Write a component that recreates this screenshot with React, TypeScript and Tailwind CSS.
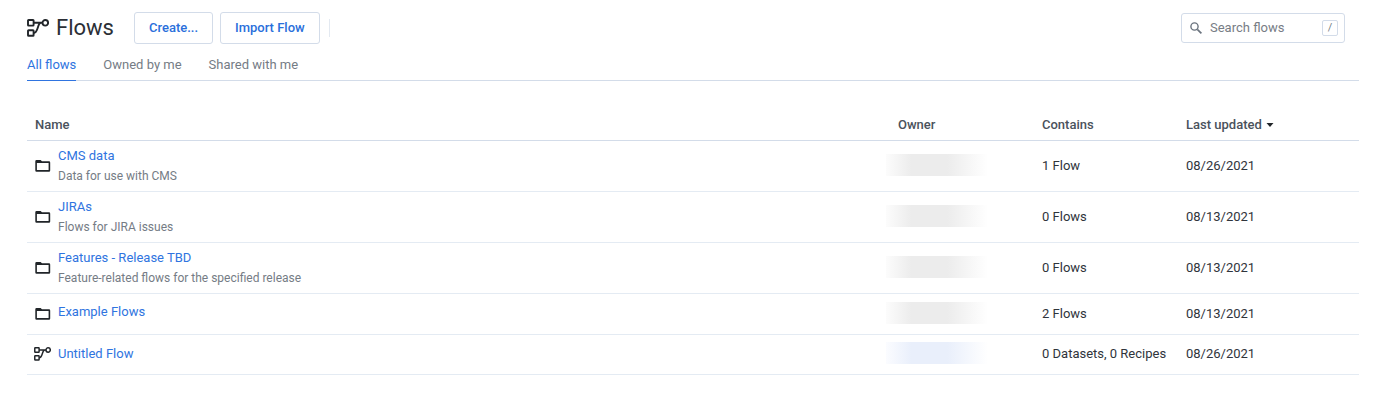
import { useState } from "react";
import { clsx } from "clsx";

const TABS = ["All flows", "Owned by me", "Shared with me"];

const ROWS = [
  {
    type: "folder",
    name: "CMS data",
    description: "Data for use with CMS",
    contains: "1 Flow",
    updated: "08/26/2021",
  },
  {
    type: "folder",
    name: "JIRAs",
    description: "Flows for JIRA issues",
    contains: "0 Flows",
    updated: "08/13/2021",
  },
  {
    type: "folder",
    name: "Features - Release TBD",
    description: "Feature-related flows for the specified release",
    contains: "0 Flows",
    updated: "08/13/2021",
  },
  { type: "folder", name: "Example Flows", contains: "2 Flows", updated: "08/13/2021" },
  { type: "flow", name: "Untitled Flow", contains: "0 Datasets, 0 Recipes", updated: "08/26/2021" },
];

function FlowIcon({ className }: { className?: string }) {
  return (
    <svg viewBox="0 0 22 18" fill="none" stroke="currentColor" strokeWidth="1.9" className={className} aria-hidden="true">
      <rect x="1" y="1" width="5.6" height="5.6" rx="0.6" />
      <rect x="1" y="11.2" width="5.6" height="5.6" rx="0.6" />
      <circle cx="18.3" cy="3.8" r="2.8" />
      <path d="M6.6 3.8H15.5M6.6 14C11.5 14 10.2 3.8 14 3.8" />
    </svg>
  );
}

function FolderIcon() {
  return (
    <svg viewBox="0 0 16 12" className="h-3 w-4" aria-hidden="true">
      <path
        fill="currentColor"
        fillRule="evenodd"
        d="M1.5 0H5.6L7 1.3H14a1.2 1.2 0 0 1 1.2 1.2v8a1.2 1.2 0 0 1-1.2 1.2H1.5A1.2 1.2 0 0 1 .3 10.5v-9.3A1.2 1.2 0 0 1 1.5 0ZM1.9 3v7.1h11.7V3Z"
      />
    </svg>
  );
}

export default function App() {
  const [tab, setTab] = useState(TABS[0]);

  return (
    <div className="bg-white pt-3 pr-6 pl-[27px] font-['Roboto',sans-serif] text-[13px] leading-5 text-[#2f343b]">
      {/* Header */}
      <header className="flex items-center justify-between pr-[14px]">
        <div className="flex items-center">
          <FlowIcon className="h-[18px] w-[22px] text-[#212529]" />
          <h1 className="ml-[7px] text-[22px] leading-8 text-[#2b2f36]">Flows</h1>
          <button type="button" className="ml-5 h-8 rounded-[3px] border border-[#d3dce9] px-[14px] font-medium text-[#2a6fdb]">
            Create...
          </button>
          <button type="button" className="ml-[7px] h-8 rounded-[3px] border border-[#d3dce9] px-[14px] font-medium text-[#2a6fdb]">
            Import Flow
          </button>
          <div className="ml-[9px] h-[18px] w-px bg-[#e3e9f1]" />
        </div>
        <label className="flex h-[30px] w-[164px] items-center rounded-[3px] border border-[#d3dce9] pr-[6px] pl-2">
          <svg viewBox="0 0 12 12" fill="none" stroke="#6b747f" className="h-3 w-3 shrink-0" aria-hidden="true">
            <circle cx="4.5" cy="4.5" r="3.6" strokeWidth="1.4" />
            <path d="M7.3 7.3L11.4 11.4" strokeWidth="1.7" />
          </svg>
          <input
            type="search"
            aria-label="Search flows"
            placeholder="Search flows"
            className="ml-2 w-full min-w-0 outline-none placeholder:text-[#777d85]"
          />
          <kbd className="flex h-4 w-4 shrink-0 items-center justify-center rounded-[2px] border border-[#d3dce9] font-['Roboto',sans-serif] text-[11px] text-[#777d85]">
            /
          </kbd>
        </label>
      </header>

      {/* Tabs */}
      <nav className="mt-[11px] flex gap-[27px] border-b border-[#d3dce9]">
        {TABS.map((item) => (
          <button
            key={item}
            type="button"
            onClick={() => setTab(item)}
            className={clsx(
              "-mb-px border-b pb-[5px]",
              item === tab ? "border-[#2f74e0] text-[#2f74e0]" : "border-transparent text-[#757c85]"
            )}
          >
            {item}
          </button>
        ))}
      </nav>

      <table className="mt-[29px] w-full table-fixed border-collapse text-left">
        <colgroup>
          <col />
          <col className="w-36" />
          <col className="w-36" />
          <col className="w-[181px]" />
        </colgroup>
        <thead>
          <tr className="h-[30px] border-b border-[#d3dce9] text-[#4a525c]">
            <th className="px-2 font-medium">Name</th>
            <th className="px-2 font-medium">Owner</th>
            <th className="px-2 font-medium">Contains</th>
            <th className="px-2 font-medium">
              <button type="button" className="flex items-center gap-1">
                Last updated
                <svg viewBox="0 0 8 4" className="h-1 w-2" aria-hidden="true">
                  <path d="M.5 0H7.5L4 4Z" fill="#212529" />
                </svg>
              </button>
            </th>
          </tr>
        </thead>
        <tbody>
          {ROWS.map((row) => (
            <tr
              key={row.name}
              className={clsx(
                "border-b border-[#e4ebf3]",
                row.description ? "h-[51px]" : row.type === "folder" ? "h-[41px]" : "h-10"
              )}
            >
              <td className="px-2">
                <div className="flex items-center">
                  <div className="flex w-[23px] shrink-0 text-[#212529]">
                    {row.type === "flow" ? <FlowIcon className="-ml-px h-[14px] w-[17px]" /> : <FolderIcon />}
                  </div>
                  <div className={clsx(row.type === "folder" && !row.description && "pb-1")}>
                    <a href="#" className="block text-[#2f74e0]">
                      {row.name}
                    </a>
                    {row.description && <p className="text-[12px] text-[#757c85]">{row.description}</p>}
                  </div>
                </div>
              </td>
              {/* Owner names are redacted */}
              <td className="pb-[2px]">
                <div
                  className={clsx(
                    "-ml-1 h-[22px] w-[102px]",
                    row.type === "flow"
                      ? "bg-[linear-gradient(90deg,#fbfcff,#e9effb_25%,#e9effb_60%,#fff)]"
                      : "bg-[linear-gradient(90deg,#fcfcfc,#ececec_25%,#ececec_60%,#fff)]"
                  )}
                />
              </td>
              <td className="px-2 whitespace-nowrap">{row.contains}</td>
              <td className="px-2">{row.updated}</td>
            </tr>
          ))}
        </tbody>
      </table>
    </div>
  );
}
